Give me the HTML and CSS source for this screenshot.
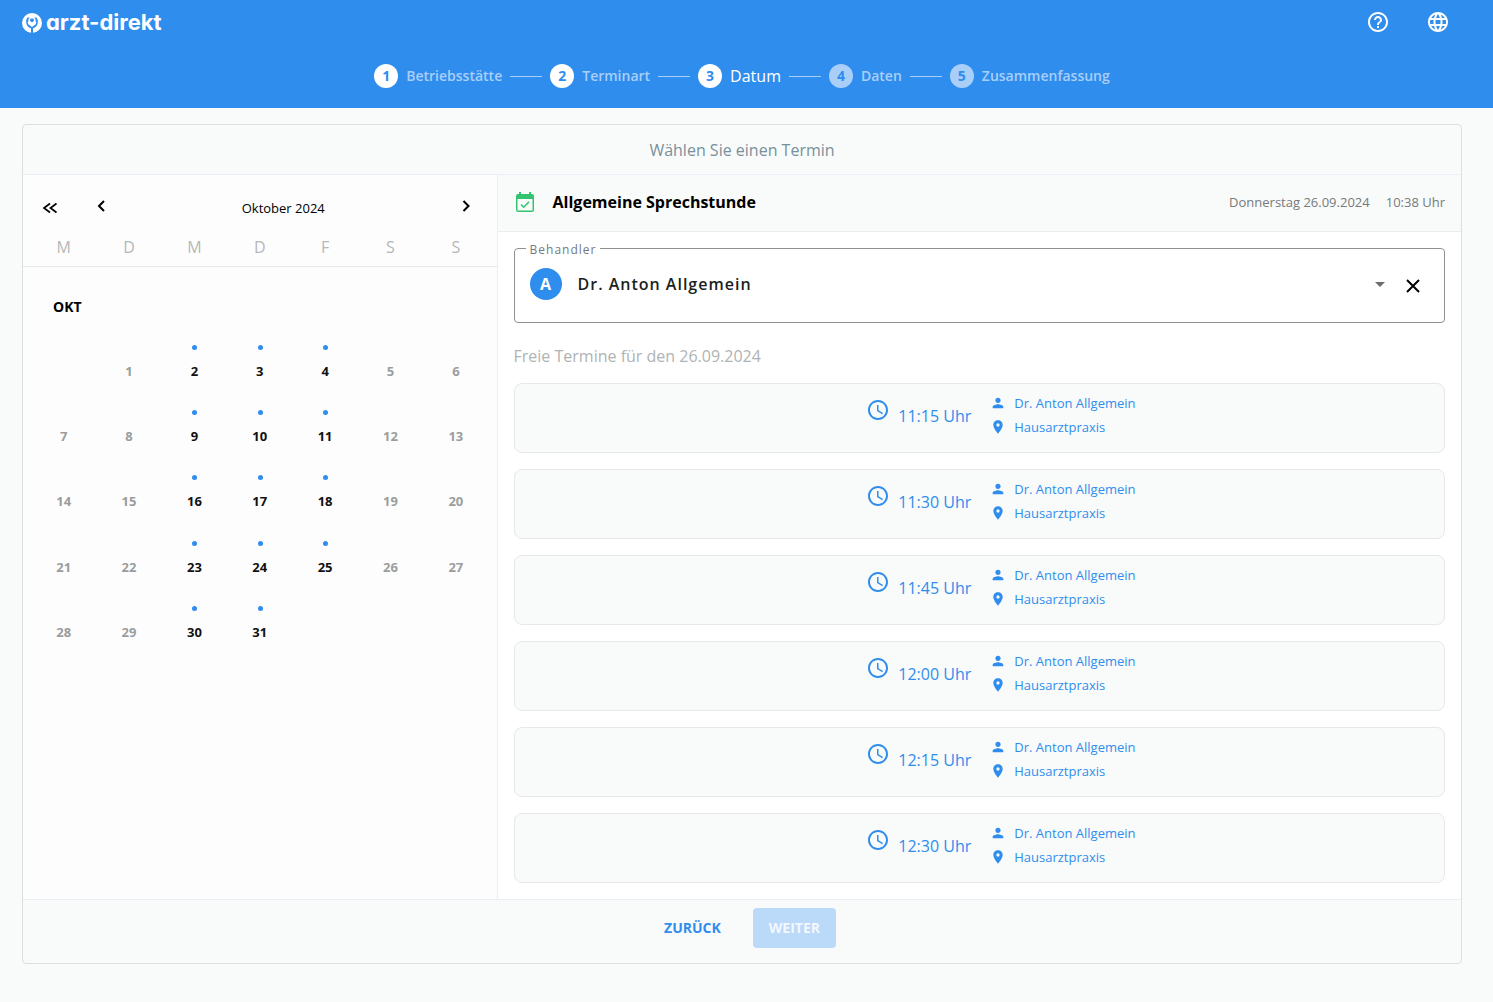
FILE: index.html
```html
<!DOCTYPE html>
<html lang="de">
<head>
<meta charset="utf-8">
<meta name="viewport" content="width=device-width, initial-scale=1">
<title>arzt-direkt – Terminbuchung</title>
<link rel="stylesheet" href="styles.css">
</head>
<body>
<svg class="sprite" aria-hidden="true">
  <symbol id="clock" viewBox="0 0 24 24"><path d="M11.99 2C6.47 2 2 6.48 2 12s4.47 10 9.99 10C17.52 22 22 17.52 22 12S17.52 2 11.99 2zM12 20c-4.42 0-8-3.58-8-8s3.58-8 8-8 8 3.58 8 8-3.58 8-8 8zm.5-13H11v6l5.25 3.15.75-1.23-4.5-2.67z"/></symbol>
  <symbol id="person" viewBox="0 0 24 24"><path d="M12 12c2.210 0 4-1.790 4-4s-1.790-4-4-4-4 1.790-4 4 1.790 4 4 4zm0 2c-2.670 0-8 1.340-8 4v2h16v-2c0-2.660-5.330-4-8-4z"/></symbol>
  <symbol id="place" viewBox="0 0 24 24"><path d="M12 2C8.130 2 5 5.130 5 9c0 5.250 7 13 7 13s7-7.750 7-13c0-3.870-3.130-7-7-7zm0 9.500a2.500 2.500 0 1 1 0-5 2.500 2.500 0 0 1 0 5z"/></symbol>
</svg>

<header class="topbar">
  <div class="topbar-row">
    <a class="brand" href="#">
      <svg class="brand-mark" viewBox="0 0 20 20" aria-hidden="true">
        <circle cx="10" cy="10" r="10" fill="#fff"/>
        <path d="M7.500 4.500H5.500C4.400 6 4 7.600 4.200 9.500c.3 3 2 5 4.800 5.700V20h2v-4.800c2.800-.7 4.500-2.700 4.800-5.700.2-1.900-.2-3.500-1.300-5h-2v1.500H7.500z" fill="#2f8dee"/>
        <path d="M6.500 5.500h1.700v2.700L10 9l1.800-.8V5.500h1.700v2.300c1 .8.900 2.700 0 3.700L10 14l-3.500-2.500c-.9-1-1-2.900 0-3.700z" fill="#fff"/>
        <path d="M8.800 5.500h2.400V8L10 9 8.800 8z" fill="#2f8dee"/>
      </svg>
      <span class="brand-name">arzt-direkt</span>
    </a>
    <div class="topbar-actions">
      <button class="icon-button" type="button" aria-label="Hilfe">
        <svg viewBox="0 0 24 24"><path d="M11 18h2v-2h-2v2zm1-16C6.480 2 2 6.480 2 12s4.480 10 10 10 10-4.480 10-10S17.520 2 12 2zm0 18c-4.410 0-8-3.590-8-8s3.590-8 8-8 8 3.590 8 8-3.590 8-8 8zm0-14c-2.210 0-4 1.790-4 4h2c0-1.100.9-2 2-2s2 .9 2 2c0 2-3 1.750-3 5h2c0-2.250 3-2.500 3-5 0-2.210-1.790-4-4-4z"/></svg>
      </button>
      <button class="icon-button" type="button" aria-label="Sprache">
        <svg viewBox="0 0 24 24"><path d="M11.990 2C6.470 2 2 6.480 2 12s4.470 10 9.990 10C17.520 22 22 17.520 22 12S17.520 2 11.990 2zm6.930 6h-2.950a15.650 15.650 0 0 0-1.380-3.560A8.030 8.030 0 0 1 18.920 8zM12 4.040c.83 1.200 1.480 2.530 1.910 3.960h-3.820c.43-1.430 1.080-2.760 1.910-3.960zM4.260 14C4.100 13.360 4 12.690 4 12s.1-1.360.26-2h3.380c-.08.66-.14 1.320-.14 2s.06 1.340.14 2H4.260zm.82 2h2.950c.32 1.250.78 2.450 1.380 3.560A7.990 7.990 0 0 1 5.080 16zm2.950-8H5.080a7.990 7.990 0 0 1 4.330-3.560A15.650 15.650 0 0 0 8.030 8zM12 19.960c-.83-1.200-1.480-2.530-1.910-3.960h3.820c-.43 1.430-1.080 2.760-1.910 3.960zM14.340 14H9.660c-.09-.66-.16-1.320-.16-2s.07-1.350.16-2h4.680c.09.65.16 1.320.16 2s-.07 1.340-.16 2zm.25 5.560c.6-1.110 1.060-2.310 1.380-3.560h2.950a8.030 8.030 0 0 1-4.330 3.560zM16.360 14c.08-.66.14-1.320.14-2s-.06-1.340-.14-2h3.380c.16.64.26 1.310.26 2s-.1 1.360-.26 2h-3.380z"/></svg>
      </button>
    </div>
  </div>
  <ol class="stepper">
    <li class="step done"><span class="step-number">1</span><span class="step-label">Betriebsstätte</span></li>
    <li class="step done"><span class="step-number">2</span><span class="step-label">Terminart</span></li>
    <li class="step active" aria-current="step"><span class="step-number">3</span><span class="step-label">Datum</span></li>
    <li class="step"><span class="step-number">4</span><span class="step-label">Daten</span></li>
    <li class="step"><span class="step-number">5</span><span class="step-label">Zusammenfassung</span></li>
  </ol>
</header>

<main class="page">
  <div class="card">
    <h1 class="card-title">Wählen Sie einen Termin</h1>
    <div class="columns">
      <section class="calendar" aria-label="Kalender">
        <div class="calendar-nav">
          <button class="nav-button" type="button" aria-label="Zum Anfang"><svg viewBox="0 0 16 16"><path d="M8 3.500 2 8l6 4.500M14.500 3.500 8.500 8l6 4.500" stroke-width="1.700"/></svg></button>
          <button class="nav-button previous" type="button" aria-label="Vorheriger Monat"><svg viewBox="0 0 16 16"><path d="M11 3 6 8l5 5" stroke-width="2"/></svg></button>
          <span class="calendar-month">Oktober 2024</span>
          <button class="nav-button next" type="button" aria-label="Nächster Monat"><svg viewBox="0 0 16 16"><path d="M5.500 3l5 5-5 5" stroke-width="2"/></svg></button>
        </div>
        <table class="month">
          <thead>
            <tr><th>M</th><th>D</th><th>M</th><th>D</th><th>F</th><th>S</th><th>S</th></tr>
          </thead>
          <tbody>
            <tr class="month-row"><th colspan="7">OKT</th></tr>
            <tr><td></td><td><button class="day" disabled>1</button></td><td><button class="day">2</button></td><td><button class="day">3</button></td><td><button class="day">4</button></td><td><button class="day" disabled>5</button></td><td><button class="day" disabled>6</button></td></tr>
            <tr><td><button class="day" disabled>7</button></td><td><button class="day" disabled>8</button></td><td><button class="day">9</button></td><td><button class="day">10</button></td><td><button class="day">11</button></td><td><button class="day" disabled>12</button></td><td><button class="day" disabled>13</button></td></tr>
            <tr><td><button class="day" disabled>14</button></td><td><button class="day" disabled>15</button></td><td><button class="day">16</button></td><td><button class="day">17</button></td><td><button class="day">18</button></td><td><button class="day" disabled>19</button></td><td><button class="day" disabled>20</button></td></tr>
            <tr><td><button class="day" disabled>21</button></td><td><button class="day" disabled>22</button></td><td><button class="day">23</button></td><td><button class="day">24</button></td><td><button class="day">25</button></td><td><button class="day" disabled>26</button></td><td><button class="day" disabled>27</button></td></tr>
            <tr><td><button class="day" disabled>28</button></td><td><button class="day" disabled>29</button></td><td><button class="day">30</button></td><td><button class="day">31</button></td><td></td><td></td><td></td></tr>
          </tbody>
        </table>
      </section>

      <section class="booking">
        <div class="booking-header">
          <svg class="booking-icon" viewBox="0 0 24 24" aria-hidden="true"><path d="M19 4h-1V2h-2v2H8V2H6v2H5a2 2 0 0 0-2 2v14a2 2 0 0 0 2 2h14a2 2 0 0 0 2-2V6a2 2 0 0 0-2-2zm.500 16.500h-15V9h15v11.500z"/><path d="M8 14.500l2.700 2.700 5.300-5.300" fill="none" stroke="#34c471" stroke-width="1.500"/></svg>
          <h2 class="booking-title">Allgemeine Sprechstunde</h2>
          <span class="booking-date">Donnerstag 26.09.2024</span>
          <span class="booking-time">10:38 Uhr</span>
        </div>
        <div class="booking-body">
          <fieldset class="doctor-field">
            <legend><label for="doctor">Behandler</label></legend>
            <div class="doctor-row">
              <span class="avatar">A</span>
              <select id="doctor" class="doctor-select"><option>Dr. Anton Allgemein</option></select>
              <svg class="caret" viewBox="0 0 10 5" aria-hidden="true"><path d="M0 0h10L5 5z"/></svg>
              <button class="clear-button" type="button" aria-label="Auswahl löschen"><svg viewBox="0 0 14 14"><path d="M1 1l12 12M13 1 1 13"/></svg></button>
            </div>
          </fieldset>
          <h3 class="slots-title">Freie Termine für den 26.09.2024</h3>
          <div class="slots">
            <button class="slot" type="button">
              <span class="slot-time"><svg><use href="#clock"/></svg><span>11:15 Uhr</span></span>
              <span class="slot-info"><span><svg><use href="#person"/></svg>Dr. Anton Allgemein</span><span><svg><use href="#place"/></svg>Hausarztpraxis</span></span>
            </button>
            <button class="slot" type="button">
              <span class="slot-time"><svg><use href="#clock"/></svg><span>11:30 Uhr</span></span>
              <span class="slot-info"><span><svg><use href="#person"/></svg>Dr. Anton Allgemein</span><span><svg><use href="#place"/></svg>Hausarztpraxis</span></span>
            </button>
            <button class="slot" type="button">
              <span class="slot-time"><svg><use href="#clock"/></svg><span>11:45 Uhr</span></span>
              <span class="slot-info"><span><svg><use href="#person"/></svg>Dr. Anton Allgemein</span><span><svg><use href="#place"/></svg>Hausarztpraxis</span></span>
            </button>
            <button class="slot" type="button">
              <span class="slot-time"><svg><use href="#clock"/></svg><span>12:00 Uhr</span></span>
              <span class="slot-info"><span><svg><use href="#person"/></svg>Dr. Anton Allgemein</span><span><svg><use href="#place"/></svg>Hausarztpraxis</span></span>
            </button>
            <button class="slot" type="button">
              <span class="slot-time"><svg><use href="#clock"/></svg><span>12:15 Uhr</span></span>
              <span class="slot-info"><span><svg><use href="#person"/></svg>Dr. Anton Allgemein</span><span><svg><use href="#place"/></svg>Hausarztpraxis</span></span>
            </button>
            <button class="slot" type="button">
              <span class="slot-time"><svg><use href="#clock"/></svg><span>12:30 Uhr</span></span>
              <span class="slot-info"><span><svg><use href="#person"/></svg>Dr. Anton Allgemein</span><span><svg><use href="#place"/></svg>Hausarztpraxis</span></span>
            </button>
          </div>
        </div>
      </section>
    </div>
    <footer class="card-footer">
      <button class="button" type="button">ZURÜCK</button>
      <button class="button primary" type="button" disabled>WEITER</button>
    </footer>
  </div>
</main>
</body>
</html>
```
FILE: styles.css
```css
*,
*::before,
*::after {
  box-sizing: border-box;
}

body {
  margin: 0;
  min-height: 100vh;
  background: #f9fbfa;
  color: #000;
  font: 16px/24px "Open Sans", "Noto Sans", sans-serif;
}

button,
select {
  margin: 0;
  padding: 0;
  border: 0;
  background: none;
  color: inherit;
  font: inherit;
  cursor: pointer;
}

button:disabled {
  cursor: default;
}

svg {
  display: block;
  flex: none;
  fill: currentColor;
}

.sprite {
  display: none;
}

/* Top bar */
.topbar {
  height: 108px;
  padding: 0 31px 0 22px;
  background: #2f8dee;
  color: #fff;
}

.topbar-row {
  display: flex;
  align-items: center;
  justify-content: space-between;
  height: 44px;
}

.brand {
  display: flex;
  align-items: center;
  gap: 4px;
  padding-top: 2px;
  color: #fff;
  text-decoration: none;
}

.brand-mark {
  width: 20px;
  height: 20px;
}

.brand-name {
  padding-bottom: 2px;
  font: 700 22px/24px Inter, sans-serif;
  font-feature-settings: "cv11";
}

.topbar-actions {
  display: flex;
  gap: 36px;
  padding-right: 12px;
}

.icon-button svg {
  width: 24px;
  height: 24px;
}

.stepper {
  display: flex;
  align-items: center;
  justify-content: center;
  gap: 8px;
  margin: 0;
  padding: 20px 0 0;
  list-style: none;
}

.step {
  display: flex;
  align-items: center;
  gap: 8px;
}

.step + .step::before {
  content: "";
  width: 32px;
  height: 1px;
  background: #a9cff8;
}

.step-number {
  width: 24px;
  height: 24px;
  border-radius: 50%;
  background: #a9cff8;
  color: #2f8dee;
  font-size: 14px;
  font-weight: 700;
  text-align: center;
}

.step.done .step-number,
.step.active .step-number {
  background: #fff;
}

.step-label {
  color: #a9cff8;
  font-size: 14px;
  font-weight: 600;
}

.step.active .step-label {
  color: #fff;
  font-size: 16px;
  font-weight: 500;
}

/* Card */
.page {
  padding: 16px 31px 38px 22px;
}

.card {
  overflow: hidden;
  border: 1px solid #dcdfde;
  border-radius: 4px;
}

.card-title {
  margin: 0;
  padding: 13px 16px 12px;
  border-bottom: 1px solid #e8eff5;
  color: #78909c;
  font-size: 16px;
  font-weight: 400;
  text-align: center;
}

.columns {
  display: flex;
  background: #fff;
}

/* Calendar */
.calendar {
  width: 33%;
  flex: none;
  border-right: 1px solid #e8eff5;
  background: #fdfdfd;
}

.calendar-nav {
  display: flex;
  align-items: center;
  padding: 21px 23px 0 19px;
}

.nav-button svg {
  width: 16px;
  height: 16px;
  fill: none;
  stroke: #000;
}

.previous {
  margin-left: 35px;
}

.previous,
.next {
  padding-bottom: 4px;
}

.calendar-month {
  flex: 1;
  font-size: 13px;
  text-align: center;
}

.month {
  display: block;
}

.month thead,
.month tbody {
  display: block;
}

.month tr {
  display: grid;
  grid-template-columns: repeat(7, 1fr);
  padding: 0 8px;
}

.month thead {
  padding: 15px 0 7px;
  border-bottom: 1px solid #e6e8e8;
}

.month th,
.month td {
  padding: 0;
}

.month thead th {
  color: #b5b8b8;
  font-weight: 400;
}

.month .month-row {
  grid-template-columns: 1fr;
  padding: 28px 30px 19px;
}

.month-row th {
  font-size: 14px;
  font-weight: 700;
  text-align: left;
}

.day {
  position: relative;
  display: block;
  width: 100%;
  aspect-ratio: 1;
  color: #111;
  font-size: 13px;
  font-weight: 700;
}

.day:disabled {
  color: #9b9d9d;
}

.day:enabled::before {
  content: "";
  position: absolute;
  top: calc(50% - 26px);
  left: calc(50% - 2px);
  width: 5px;
  height: 5px;
  border-radius: 50%;
  background: #2f8dee;
}

/* Booking */
.booking {
  flex: 1;
  min-width: 0;
}

.booking-header {
  display: flex;
  align-items: center;
  gap: 16px;
  padding: 15px 16px 17px 15px;
  border-bottom: 1px solid #e8eeee;
  background: #f9fbfa;
}

.booking-icon {
  width: 24px;
  height: 24px;
  color: #34c471;
}

.booking-title {
  flex: 1;
  margin: 0;
  font-size: 16px;
  font-weight: 700;
}

.booking-date,
.booking-time {
  color: #757a7c;
  font-size: 13px;
}

.booking-body {
  padding: 6px 16px 16px;
}

.doctor-field {
  min-width: 0;
  margin: 0;
  padding: 10px 24px 22px 15px;
  border: 1px solid #8f9191;
  border-radius: 4px;
}

.doctor-field legend {
  margin-left: -4px;
  padding: 4px 4px 0;
  color: #757a7c;
  font-size: 12px;
  line-height: 16px;
  letter-spacing: 1px;
}

.doctor-field label {
  display: block;
}

.doctor-row {
  display: flex;
  align-items: center;
}

.avatar {
  flex: none;
  width: 32px;
  height: 32px;
  margin-right: 16px;
  border-radius: 50%;
  background: #2f8dee;
  color: #fff;
  font-weight: 700;
  line-height: 32px;
  text-align: center;
}

.doctor-select {
  flex: 1;
  min-width: 0;
  height: 32px;
  appearance: none;
  color: #1c1f20;
  font-weight: 600;
  letter-spacing: 1px;
}

.caret {
  width: 10px;
  height: 5px;
  margin-right: 21px;
  color: #6b6d6e;
}

.clear-button {
  padding-top: 4px;
}

.clear-button svg {
  width: 14px;
  height: 14px;
  fill: none;
  stroke: #000;
  stroke-width: 2;
}

.slots-title {
  margin: 21px 0 15px;
  color: #b0b3b3;
  font-size: 16px;
  font-weight: 400;
}

.slots {
  display: grid;
  gap: 16px;
}

.slot {
  display: grid;
  grid-template-columns: 1fr 1fr;
  height: 70px;
  padding-top: 7px;
  border: 1px solid #e6e9e8;
  border-radius: 8px;
  background: #f9fbfa;
  color: #2f8dee;
}

.slot-time {
  display: flex;
  justify-content: flex-end;
  gap: 8px;
  padding: 7px 8px 0 0;
}

.slot-time svg {
  width: 24px;
  height: 24px;
}

.slot-time span {
  padding-top: 6px;
}

.slot-info {
  padding-left: 11px;
  font-size: 13px;
}

.slot-info > span {
  display: flex;
  align-items: center;
  gap: 8px;
}

.slot-info svg {
  width: 16px;
  height: 16px;
}

.card-footer {
  display: flex;
  justify-content: center;
  gap: 16px;
  padding: 8px 16px 15px;
  border-top: 1px solid #e8eff5;
}

.button {
  height: 40px;
  padding: 0 16px;
  border-radius: 4px;
  color: #2f8dee;
  font-size: 14px;
  font-weight: 700;
}

.button.primary {
  background: #bbd9f9;
  color: #f3f8fd;
}
```
